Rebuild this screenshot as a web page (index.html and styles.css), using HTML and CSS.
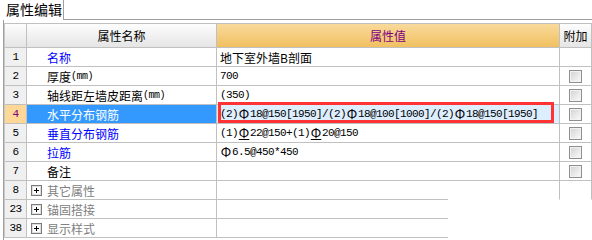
FILE: index.html
```html
<!DOCTYPE html>
<html lang="zh-CN">
<head>
    <meta charset="UTF-8">
    <title>属性编辑</title>
    <link rel="stylesheet" href="styles.css">
</head>
<body>
    <div class="tabs">
        <div class="tab">属性编辑</div>
        <div class="tab-rest"></div>
    </div>
    <div class="panel">
        <div class="grid">
            <div class="row head">
                <div class="num"></div>
                <div class="name">属性名称</div>
                <div class="val">属性值</div>
                <div class="add">附加</div>
            </div>
            <div class="row">
                <div class="num">1</div>
                <div class="name blue">名称</div>
                <div class="val">地下室外墙B剖面</div>
                <div class="add"></div>
            </div>
            <div class="row">
                <div class="num">2</div>
                <div class="name">厚度<span class="unit">(mm)</span></div>
                <div class="val mono">700</div>
                <div class="add"><span class="check"></span></div>
            </div>
            <div class="row">
                <div class="num">3</div>
                <div class="name">轴线距左墙皮距离<span class="unit">(mm)</span></div>
                <div class="val mono">(350)</div>
                <div class="add"><span class="check"></span></div>
            </div>
            <div class="row sel">
                <div class="num">4</div>
                <div class="name">水平分布钢筋</div>
                <div class="val mono">(2)<span class="bar g3">Φ</span>18@150[1950]/(2)<span class="bar g3">Φ</span>18@100[1000]/(2)<span class="bar g3">Φ</span>18@150[1950]<span class="mark"></span></div>
                <div class="add"><span class="check"></span></div>
            </div>
            <div class="row">
                <div class="num">5</div>
                <div class="name blue">垂直分布钢筋</div>
                <div class="val mono">(1)<span class="bar g3">Φ</span>22@150+(1)<span class="bar g3">Φ</span>20@150</div>
                <div class="add"><span class="check"></span></div>
            </div>
            <div class="row">
                <div class="num">6</div>
                <div class="name blue">拉筋</div>
                <div class="val mono"><span class="bar">Φ</span>6.5@450*450</div>
                <div class="add"><span class="check"></span></div>
            </div>
            <div class="row">
                <div class="num">7</div>
                <div class="name">备注</div>
                <div class="val"></div>
                <div class="add"><span class="check"></span></div>
            </div>
            <div class="row group">
                <div class="num">8</div>
                <div class="name"><svg class="plus" width="11" height="11"><rect x="0.5" y="0.5" width="10" height="10" fill="#fff" stroke="#7a7a7a"/><rect x="1.5" y="1.5" width="8" height="8" fill="none" stroke="#e0e0e0"/><path d="M3 5.5h5M5.5 3v5" stroke="#000"/></svg>其它属性</div>
                <div class="val tail"></div>
                <div class="add open"></div>
            </div>
            <div class="row group">
                <div class="num">23</div>
                <div class="name"><svg class="plus" width="11" height="11"><rect x="0.5" y="0.5" width="10" height="10" fill="#fff" stroke="#7a7a7a"/><rect x="1.5" y="1.5" width="8" height="8" fill="none" stroke="#e0e0e0"/><path d="M3 5.5h5M5.5 3v5" stroke="#000"/></svg>锚固搭接</div>
                <div class="val tail end"></div>
                <div class="add none"></div>
            </div>
            <div class="row group">
                <div class="num">38</div>
                <div class="name"><svg class="plus" width="11" height="11"><rect x="0.5" y="0.5" width="10" height="10" fill="#fff" stroke="#7a7a7a"/><rect x="1.5" y="1.5" width="8" height="8" fill="none" stroke="#e0e0e0"/><path d="M3 5.5h5M5.5 3v5" stroke="#000"/></svg>显示样式</div>
                <div class="val tail end"></div>
                <div class="add none"></div>
            </div>
        </div>
    </div>
</body>
</html>
```

FILE: styles.css
```css
* {
    box-sizing: border-box;
}

body {
    margin: 0;
    background-color: #fff;
    color: #000;
    font-family: "Noto Sans CJK SC", sans-serif;
    font-size: 12px;
}

.tabs {
    display: flex;
    height: 20px;
}

.tab {
    width: 64px;
    padding-left: 6px;
    border-right: 1px solid #a0a0a0;
    font-size: 14px;
    line-height: 19px;
}

.tab-rest {
    flex: 1;
    border-bottom: 1px solid #a0a0a0;
}

.panel {
    height: 220px;
    margin-left: 3px;
    padding-top: 3px;
    border-left: 1px solid #a0a0a0;
}

.grid {
    border-left: 1px solid #c8c8c8;
    border-top: 1px solid #c0c0c0;
}

.row {
    display: grid;
    grid-template-columns: 22px 190px 343px 32px;
    height: 19px;
}

.row > div {
    display: flex;
    align-items: center;
    border-right: 1px solid #c0c0c0;
    border-bottom: 1px solid #c0c0c0;
    white-space: nowrap;
}

.num {
    justify-content: center;
    background-color: #f0f0f0;
    font-family: "Liberation Mono", monospace;
    font-size: 11px;
    letter-spacing: -0.6px;
}

.name {
    padding-left: 20px;
}

.val {
    padding-left: 3px;
}

.add {
    justify-content: center;
}

.head {
    height: 24px;
}

.head > div {
    justify-content: center;
    padding-left: 0;
    background: linear-gradient(#fdfdfd, #e5e5e5);
}

.head > .val {
    background: linear-gradient(#f9da9c, #f1c060);
    color: #800080;
}

.blue {
    color: #0000ff;
}

.unit {
    font-family: "Liberation Mono", monospace;
    font-size: 10px;
    letter-spacing: -0.5px;
}

.mono {
    font-family: "Liberation Mono", "Noto Sans CJK SC", monospace;
    font-size: 11px;
    letter-spacing: -0.6px;
}

.bar {
    display: inline-block;
    width: 12px;
    text-align: center;
    letter-spacing: 0;
    font-family: "Noto Sans CJK SC", sans-serif;
    font-size: 13px;
    line-height: 12px;
}

.g3 {
    text-decoration: underline;
    text-underline-offset: 1px;
}

.check {
    width: 13px;
    height: 13px;
    border: 1px solid #8e8e8e;
    background: linear-gradient(135deg, #d2d2d2, #fbfbfb);
    box-shadow: inset 0 0 0 1px #f2f2f2;
}

.sel .num {
    background-color: #ffd898;
    color: #800080;
}

.sel .name {
    background-color: #3399ff;
    color: #fff;
}

.sel .val {
    position: relative;
    background-color: #ddeeff;
}

.mark {
    position: absolute;
    left: 1px;
    top: -3px;
    width: 336px;
    height: 21px;
    border: 3px solid #ff3333;
}

.group .name {
    padding-left: 4px;
    color: #808080;
}

.plus {
    margin-right: 5px;
}

.row > .tail {
    border-bottom-color: transparent;
    background: linear-gradient(#c0c0c0, #c0c0c0) left bottom / 231px 1px no-repeat;
    background-origin: border-box;
}

.row > .end {
    border-right-color: transparent;
}

.row > .open {
    border-bottom-color: transparent;
}

.row > .none {
    border-right-color: transparent;
    border-bottom-color: transparent;
}
```
